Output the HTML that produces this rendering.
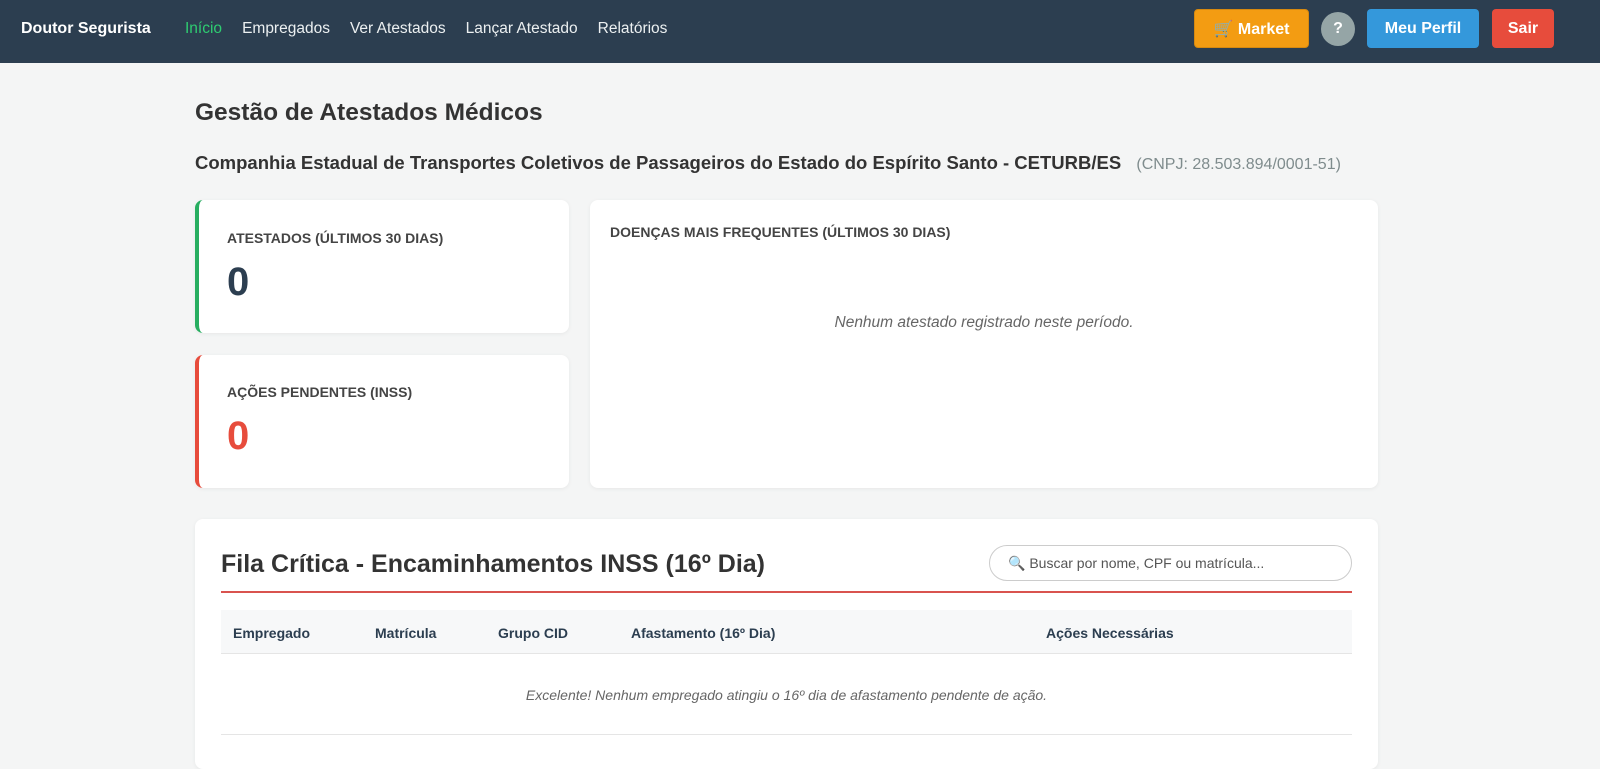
<!DOCTYPE html>
<html><head><meta charset="utf-8"><style>
*{box-sizing:border-box;margin:0;padding:0}
body{width:1600px;height:752px;overflow:hidden;background:#f4f5f5;font-family:"Liberation Sans",sans-serif;color:#2c3e50}
.nav{height:63px;background:#2c3e50;position:relative;color:#fff}
.nav .brand{position:absolute;left:21px;top:20px;font-weight:bold;font-size:16px}
.nav .links{position:absolute;left:185px;top:20px;font-size:15.5px}
.nav .links span{margin-right:20px;color:#ecf0f1}
.nav .links span.a{color:#2ecc71}
.btn{position:absolute;top:9px;height:39px;border-radius:4px;color:#fff;font-weight:bold;font-size:16px;line-height:39px;text-align:center}
.card{position:absolute;background:#fff;border-radius:8px;box-shadow:0 1px 4px rgba(0,0,0,.06)}
.lbl{font-size:14px;font-weight:bold;color:#444}
.num{font-size:40px;font-weight:bold}
</style></head><body>
<div class="nav">
<div class="brand">Doutor Segurista</div>
<div class="links"><span class="a">Início</span><span>Empregados</span><span>Ver Atestados</span><span>Lançar Atestado</span><span>Relatórios</span></div>
<div class="btn" style="left:1194px;width:115px;background:#f39c12;border:1px solid #d68910">🛒 Market</div>
<div class="btn" style="left:1321px;top:12px;width:34px;height:34px;line-height:34px;border-radius:50%;background:#95a5a6">?</div>
<div class="btn" style="left:1367px;width:112px;background:#3498db">Meu Perfil</div>
<div class="btn" style="left:1492px;width:62px;background:#e74c3c">Sair</div>
</div>
<div style="position:absolute;left:195px;top:99px;font-size:24.5px;font-weight:bold;color:#333">Gestão de Atestados Médicos</div>
<div style="position:absolute;left:195px;top:152px;font-size:18.5px;font-weight:bold;color:#333;white-space:nowrap">Companhia Estadual de Transportes Coletivos de Passageiros do Estado do Espírito Santo - CETURB/ES <span style="font-weight:normal;color:#7f8c8d;font-size:16px;margin-left:10px">(CNPJ: 28.503.894/0001-51)</span></div>
<div class="card" style="left:195px;top:200px;width:374px;height:133px;border-left:4px solid #27ae60">
<div class="lbl" style="position:absolute;left:28px;top:30px">ATESTADOS (ÚLTIMOS 30 DIAS)</div>
<div class="num" style="position:absolute;left:28px;top:60px">0</div></div>
<div class="card" style="left:195px;top:355px;width:374px;height:133px;border-left:4px solid #e74c3c">
<div class="lbl" style="position:absolute;left:28px;top:29px">AÇÕES PENDENTES (INSS)</div>
<div class="num" style="position:absolute;left:28px;top:59px;color:#e74c3c">0</div></div>
<div class="card" style="left:590px;top:200px;width:788px;height:288px">
<div class="lbl" style="position:absolute;left:20px;top:24px">DOENÇAS MAIS FREQUENTES (ÚLTIMOS 30 DIAS)</div>
<div style="position:absolute;left:0;right:0;top:114px;text-align:center;font-style:italic;color:#666;font-size:15.5px">Nenhum atestado registrado neste período.</div></div>
<div class="card" style="left:195px;top:519px;width:1183px;height:250px">
<div style="position:absolute;left:26px;top:31px;font-size:25px;font-weight:bold;color:#333">Fila Crítica - Encaminhamentos INSS (16º Dia)</div>
<div style="position:absolute;left:794px;top:26px;width:363px;height:36px;border:1px solid #ccc;border-radius:18px;font-size:14px;color:#555;line-height:34px;padding-left:18px">🔍 Buscar por nome, CPF ou matrícula...</div>
<div style="position:absolute;left:26px;top:72px;width:1131px;height:2px;background:#d9534f"></div>
<div style="position:absolute;left:26px;top:91px;width:1131px;height:44px;background:#f7f8f9;border-bottom:1px solid #e5e5e5"></div>
<div style="position:absolute;top:106px;left:38px"><b style="font-size:14px">Empregado</b></div>
<div style="position:absolute;top:106px;left:180px"><b style="font-size:14px">Matrícula</b></div>
<div style="position:absolute;top:106px;left:303px"><b style="font-size:14px">Grupo CID</b></div>
<div style="position:absolute;top:106px;left:436px"><b style="font-size:14px">Afastamento (16º Dia)</b></div>
<div style="position:absolute;top:106px;left:851px"><b style="font-size:14px">Ações Necessárias</b></div>
<div style="position:absolute;left:26px;width:1131px;top:168px;text-align:center;font-style:italic;color:#666;font-size:14px">Excelente! Nenhum empregado atingiu o 16º dia de afastamento pendente de ação.</div>
<div style="position:absolute;left:26px;top:215px;width:1131px;height:1px;background:#e5e5e5"></div>
</div>
</body></html>
